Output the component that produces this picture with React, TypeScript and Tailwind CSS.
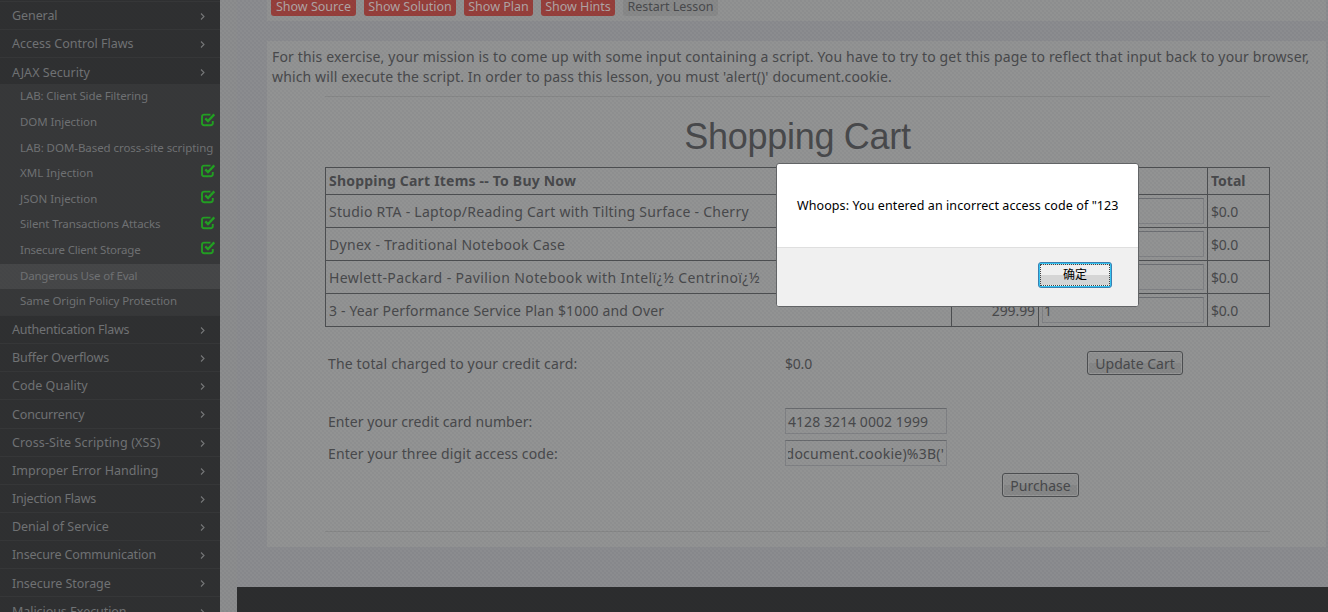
import React from "react";

type Lesson = { label: string; tracking: string; done?: boolean; active?: boolean };

const topMenu = [
  { label: "General", tracking: "tracking-[-0.08px]" },
  { label: "Access Control Flaws", tracking: "tracking-[0px]" },
  { label: "AJAX Security", tracking: "tracking-[0.04px]" },
];

const lessons: Lesson[] = [
  { label: "LAB: Client Side Filtering", tracking: "tracking-[-0.12px]" },
  { label: "DOM Injection", tracking: "tracking-[-0.08px]", done: true },
  { label: "LAB: DOM-Based cross-site scripting", tracking: "tracking-[-0.06px]" },
  { label: "XML Injection", tracking: "tracking-[0px]", done: true },
  { label: "JSON Injection", tracking: "tracking-[0px]", done: true },
  { label: "Silent Transactions Attacks", tracking: "tracking-[-0.11px]", done: true },
  { label: "Insecure Client Storage", tracking: "tracking-[-0.22px]", done: true },
  { label: "Dangerous Use of Eval", tracking: "tracking-[-0.2px]", active: true },
  { label: "Same Origin Policy Protection", tracking: "tracking-[-0.1px]" },
];

const bottomMenu = [
  { label: "Authentication Flaws", tracking: "tracking-[-0.25px]" },
  { label: "Buffer Overflows", tracking: "tracking-[-0.11px]" },
  { label: "Code Quality", tracking: "tracking-[0.03px]" },
  { label: "Concurrency", tracking: "tracking-[-0.16px]" },
  { label: "Cross-Site Scripting (XSS)", tracking: "tracking-[0.12px]" },
  { label: "Improper Error Handling", tracking: "tracking-[0.03px]" },
  { label: "Injection Flaws", tracking: "tracking-[-0.2px]" },
  { label: "Denial of Service", tracking: "tracking-[-0.04px]" },
  { label: "Insecure Communication", tracking: "tracking-[-0.16px]" },
  { label: "Insecure Storage", tracking: "tracking-[-0.05px]" },
  { label: "Malicious Execution", tracking: "tracking-[-0.06px]" },
];

const products = [
  { name: "Studio RTA - Laptop/Reading Cart with Tilting Surface - Cherry", tracking: "tracking-[0.26px]" },
  { name: "Dynex - Traditional Notebook Case", tracking: "tracking-[0.3px]" },
  { name: "Hewlett-Packard - Pavilion Notebook with Intelï¿½ Centrinoï¿½", tracking: "tracking-[0.4px]" },
  { name: "3 - Year Performance Service Plan $1000 and Over", price: "299.99", quantity: "1", tracking: "tracking-[0.15px]" },
];

function Chevron() {
  return (
    <svg width="5" height="7" viewBox="0 0 5 7" fill="none" className="shrink-0">
      <path d="M1 0.5L4 3.5L1 6.5" stroke="#77797a" strokeWidth="1.1" />
    </svg>
  );
}

function CheckMark() {
  return (
    <svg width="15" height="14" viewBox="0 0 15 14" fill="none" className="mb-[5px] shrink-0">
      <path d="M9.5 1.6H3.2Q1 1.6 1 3.8V10Q1 12.2 3.2 12.2H9.6Q11.8 12.2 11.8 10V8" stroke="#22a022" strokeWidth="1.9" />
      <path d="M4.3 5.4L7 8L13.3 1.4" stroke="#22a022" strokeWidth="2.4" />
    </svg>
  );
}

function MenuItem({ label, tracking }: { label: string; tracking: string }) {
  return (
    <li className="flex h-[28.17px] items-center justify-between border-t border-[#363738] pt-[2px] pr-[15.5px] pl-3 text-[12.5px] text-[#717375]">
      <span className={tracking}>{label}</span>
      <Chevron />
    </li>
  );
}

function Sidebar() {
  return (
    <nav className="h-full w-[220px] shrink-0 overflow-hidden bg-[#2f3031] pt-px whitespace-nowrap">
      <ul className="h-[83px]">
        {topMenu.map((m) => <MenuItem key={m.label} {...m} />)}
      </ul>
      <ul className="bg-[#373839]">
        {lessons.map((l) => (
          <li
            key={l.label}
            className={`flex h-[25.67px] items-center justify-between pr-1 pl-5 text-[11.5px] text-[#707274] ${l.active ? "bg-[#464748]" : ""}`}
          >
            <span className={`pb-[2px] ${l.tracking}`}>{l.label}</span>
            {l.done && <CheckMark />}
          </li>
        ))}
      </ul>
      <ul>
        {bottomMenu.map((m) => <MenuItem key={m.label} {...m} />)}
      </ul>
    </nav>
  );
}

function LessonBar() {
  const red = "h-[18px] rounded-[3px] bg-[#963f3b] text-center text-[#b0a5a5]";
  return (
    <div className="flex h-[21px] bg-[#919292] pl-1 text-[12.5px] leading-[18px] whitespace-nowrap">
      <div className="-mt-[2px] flex gap-2">
        <div className={`${red} w-[85px]`}>Show Source</div>
        <div className={`${red} w-[92px]`}>Show Solution</div>
        <div className={`${red} w-[69px]`}>Show Plan</div>
        <div className={`${red} w-[74px]`}>Show Hints</div>
        <div className="h-[18px] w-[95px] rounded-[3px] bg-[#888989] text-center text-[#484a4c]">Restart Lesson</div>
      </div>
    </div>
  );
}

function CartTable() {
  return (
    <div className="ml-[58px] grid w-[945px] grid-cols-[626px_87px_169px_62px] border-t border-l border-[#4c4e50] [&>div]:h-[33px] [&>div]:border-r [&>div]:border-b [&>div]:border-[#4c4e50] [&>div]:leading-[34px]">
      <div className="h-[27px]! pl-[3px] leading-[26px]! font-bold tracking-[0.2px]">Shopping Cart Items -- To Buy Now</div>
      <div className="h-[27px]!" />
      <div className="h-[27px]!" />
      <div className="h-[27px]! pl-[3px] leading-[26px]! font-bold">Total</div>
      {products.map((p) => (
        <React.Fragment key={p.name}>
          <div className={`pl-[3px] ${p.tracking}`}>{p.name}</div>
          <div className="pr-[3px] text-right tracking-[-0.1px]">{p.price}</div>
          <div className="p-[3px]">
            <div className="h-[26px] w-[162px] border border-[#7f8184] border-t-[#6d6f73] pl-px leading-[26px]">{p.quantity}</div>
          </div>
          <div className="pl-[3px] tracking-[-0.2px]">$0.0</div>
        </React.Fragment>
      ))}
    </div>
  );
}

function PushButton({ children, className }: { children: string; className: string }) {
  return (
    <div className={`h-6 rounded-[3px] border border-[#4c4e50] bg-linear-to-b from-[#8f9090] from-50% to-[#868787] to-50% text-center leading-[23px] shadow-[inset_0_0_0_1px_#969797] ${className}`}>
      {children}
    </div>
  );
}

function Payment() {
  const field = "h-[26px] w-[162px] overflow-hidden border border-[#7f8184] border-t-[#696b6e] px-[2px] leading-[25px]";
  return (
    <div className="pl-[61px]">
      <div className="mt-6 flex h-6 items-center">
        <span className="w-[457px] tracking-[0.15px]">The total charged to your credit card:</span>
        <span className="w-[302px] tracking-[-0.2px]">$0.0</span>
        <PushButton className="w-[96px]">Update Cart</PushButton>
      </div>
      <div className="mt-[33px] flex h-[26px] items-center">
        <span className="w-[457px] tracking-[0.07px]">Enter your credit card number:</span>
        <div className={`${field} tracking-[0.05px]`}>4128 3214 0002 1999</div>
      </div>
      <div className="mt-[6px] flex h-[26px] items-center">
        <span className="w-[457px] tracking-[0.11px]">Enter your three digit access code:</span>
        <div className={field}>
          <div className="flex justify-end overflow-hidden tracking-[0.22px]"><span>document.cookie)%3B('</span></div>
        </div>
      </div>
      <PushButton className="mt-[7px] ml-[674px] w-[77px]">Purchase</PushButton>
    </div>
  );
}

function AlertDialog() {
  return (
    <div className="absolute top-[163px] left-[776px] h-[144px] w-[363px] overflow-hidden rounded-[3px] border border-[#626466] bg-white font-['Noto_Sans','Noto_Sans_CJK_SC',sans-serif] text-black">
      <div className="h-[83px] pt-[33px] pl-[20px] text-[12.5px] leading-[18px] tracking-[0.09px] whitespace-nowrap">
        Whoops: You entered an incorrect access code of "123
      </div>
      <div className="flex h-[60px] justify-end border-t border-[#dfdfdf] bg-[#f0f0f0] pt-[14px] pr-[26px]">
        <button className="h-[26px] w-[74px] rounded-[3px] border border-[#3c7fb1] bg-[#35c5f2] p-px">
          <span className="block h-[22px] border border-dotted border-[#444] bg-linear-to-b from-[#efefef] from-50% to-[#d5d5d5] to-50% text-[12px] leading-[20px]">确定</span>
        </button>
      </div>
    </div>
  );
}

export default function App() {
  return (
    <div className="relative flex h-[612px] w-[1328px] overflow-hidden bg-[#8b8c8f] font-['Noto_Sans','Open_Sans',sans-serif] text-[14px] text-[#48494b]">
      <Sidebar />
      <div className="w-[17px] shrink-0 bg-[#8c8d8e]" />
      <div className="flex min-w-0 flex-1 flex-col">
        <div className="pr-[2px] pl-[30px]">
          <LessonBar />
          <main className="mt-5 h-[506px] bg-[#929393] whitespace-nowrap">
            <div className="pt-[6px] pl-[5px] leading-5">
              <p className="tracking-[0.16px]">For this exercise, your mission is to come up with some input containing a script. You have to try to get this page to reflect that input back to your browser,</p>
              <p className="tracking-[0.14px]">which will execute the script. In order to pass this lesson, you must 'alert()' document.cookie.</p>
            </div>
            <hr className="mt-[9px] ml-[58px] w-[945px] border-[#868787]" />
            <h1 className="mt-[20px] ml-[58px] h-[50px] w-[945px] text-center font-['Liberation_Sans',sans-serif] text-[36px] leading-[40px] tracking-[-0.3px]">Shopping Cart</h1>
            <CartTable />
            <Payment />
            <hr className="mt-[34px] ml-[58px] w-[945px] border-[#868787]" />
          </main>
        </div>
        <footer className="mt-10 flex-1 bg-[#2c2d2e]" />
      </div>
      <div className="pointer-events-none absolute inset-0 bg-[radial-gradient(circle_at_1px_1px,rgba(35,35,55,0.045)_0.8px,transparent_1.2px),radial-gradient(circle_at_3px_3px,rgba(35,35,55,0.045)_0.8px,transparent_1.2px)] bg-size-[4px_4px]" />
      <AlertDialog />
    </div>
  );
}
